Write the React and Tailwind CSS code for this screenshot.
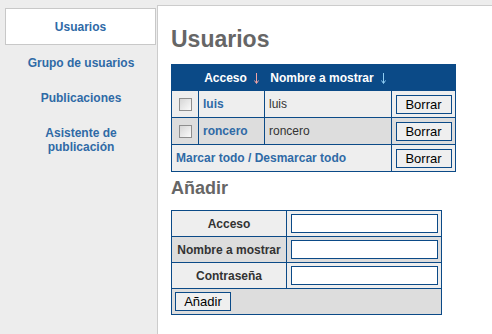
import React from "react";

const BLUE = "border-[#0b4a87]";

function SortArrow({ color }) {
  return (
    <svg width="5" height="12" viewBox="0 0 5 12" className="inline-block ml-[7px] align-[-2px]">
      <line x1="2.5" y1="1" x2="2.5" y2="11" stroke={color} strokeWidth="1" />
      <path d="M0.5 8.5 L2.5 11.5 L4.5 8.5" fill="none" stroke={color} strokeWidth="1" />
    </svg>
  );
}

function Check() {
  return (
    <span className="inline-block w-[13px] h-[13px] border border-[#8e8e8e] bg-gradient-to-br from-[#d6d6d6] to-[#fbfbfb] align-middle" />
  );
}

function Btn({ children }) {
  return (
    <button className={`h-[19px] px-0 w-[56px] border ${BLUE} bg-[#efefef] text-[13px] leading-[17px] text-black`}>
      {children}
    </button>
  );
}

const users = [
  { login: "luis", name: "luis", bg: "bg-[#eeeeee]" },
  { login: "roncero", name: "roncero", bg: "bg-[#dddddd]" },
];

export default function App() {
  return (
    <div className="flex h-[334px] w-[492px] overflow-hidden bg-[#ededed] font-['Liberation_Sans',Arial,sans-serif]">
      <aside className="w-[157px] shrink-0 pt-[8px] pl-[5px] text-center text-[12px] font-bold leading-[14px] text-[#2f6aa6]">
        <div className="w-[151px] h-[37px] border border-[#c8c8c8] bg-white flex items-center justify-center">Usuarios</div>
        <div className="pt-[11px] pb-[10px]">Grupo de usuarios</div>
        <div className="pt-[11px] pb-[10px]">Publicaciones</div>
        <div className="py-[11px]">Asistente de<br />publicación</div>
      </aside>

      <main className="flex-1 mt-[5px] border-l border-t border-[#cccccc] bg-white pl-[13px] pt-[19px]">
        <h1 className="text-[23px] leading-[28px] font-bold text-[#666666]">Usuarios</h1>

        <table className={`mt-[11px] border-collapse table-fixed w-[285px] text-[12px] border ${BLUE}`}>
          <colgroup>
            <col className="w-[27px]" />
            <col className="w-[66px]" />
            <col className="w-[127px]" />
            <col className="w-[64px]" />
          </colgroup>
          <thead>
            <tr className="h-[26px] bg-[#0b4a87] text-white font-bold">
              <th></th>
              <th className="font-bold">Acceso<SortArrow color="#f2a3a3" /></th>
              <th className="font-bold">Nombre a mostrar<SortArrow color="#8fcdf2" /></th>
              <th></th>
            </tr>
          </thead>
          <tbody>
            {users.map((u) => (
              <tr key={u.login} className={`h-[27px] ${u.bg}`}>
                <td className={`border ${BLUE} text-center`}><Check /></td>
                <td className={`border ${BLUE} pl-[4px] font-bold text-[#2f6aa6]`}>{u.login}</td>
                <td className={`border ${BLUE} pl-[4px] text-[#333333]`}>{u.name}</td>
                <td className={`border ${BLUE} text-center`}><Btn>Borrar</Btn></td>
              </tr>
            ))}
            <tr className="h-[27px] bg-[#eeeeee]">
              <td colSpan={3} className={`border ${BLUE} pl-[4px] font-bold text-[#2f6aa6]`}>Marcar todo / Desmarcar todo</td>
              <td className={`border ${BLUE} text-center`}><Btn>Borrar</Btn></td>
            </tr>
          </tbody>
        </table>

        <h2 className="mt-[5px] text-[18px] leading-[22px] font-bold text-[#666666]">Añadir</h2>

        <table className={`mt-[11px] border-collapse table-fixed w-[271px] text-[12px] border ${BLUE}`}>
          <colgroup>
            <col className="w-[115px]" />
            <col className="w-[155px]" />
          </colgroup>
          <tbody>
            {[
              ["Acceso", "bg-[#eeeeee]"],
              ["Nombre a mostrar", "bg-[#dddddd]"],
              ["Contraseña", "bg-[#eeeeee]"],
            ].map(([label, bg]) => (
              <tr key={label} className={`h-[26px] ${bg}`}>
                <td className={`border ${BLUE} text-center font-bold text-[#333333]`}>{label}</td>
                <td className={`border ${BLUE} text-center`}>
                  <input type="text" className={`block mx-auto w-[147px] h-[19px] border ${BLUE} bg-white outline-none`} />
                </td>
              </tr>
            ))}
            <tr className="h-[26px] bg-[#dddddd]">
              <td colSpan={2} className={`border ${BLUE} pl-[3px]`}><Btn>Añadir</Btn></td>
            </tr>
          </tbody>
        </table>
      </main>
    </div>
  );
}
